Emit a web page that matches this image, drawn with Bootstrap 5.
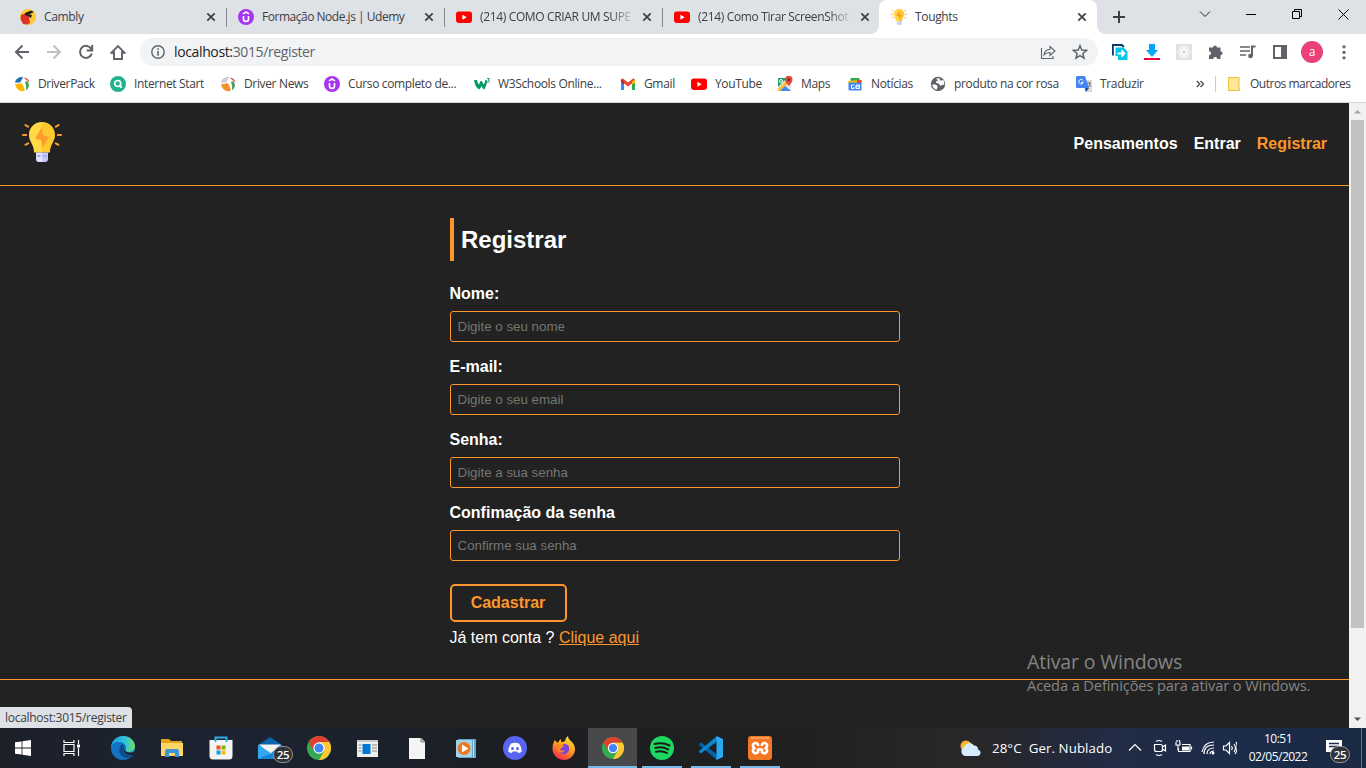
<!DOCTYPE html>
<html lang="pt">
<head>
<meta charset="utf-8">
<meta name="viewport" content="width=device-width, initial-scale=1">
<title>Toughts</title>
<link href="https://cdn.jsdelivr.net/npm/bootstrap@5.3.0/dist/css/bootstrap.min.css" rel="stylesheet">
<style>
:root{--amber:#fd972b;--ui:"Open Sans","Noto Sans",sans-serif}
body{width:1366px;height:768px;font-family:var(--ui);font-size:12px;color:#3c4043;letter-spacing:-.35px;line-height:16px}
svg{display:block;flex:none}
.tabstrip{height:34px;background:#dee1e6;padding-left:8px}
.btab{width:218px;height:34px;padding:0 10px 0 12px;position:relative}
.btab .ttl{width:155px;margin-left:8px;overflow:hidden;white-space:nowrap}
.btab .snug{letter-spacing:-.48px}
.btab .fade-out{-webkit-mask-image:linear-gradient(90deg,#000 84%,transparent);mask-image:linear-gradient(90deg,#000 84%,transparent)}
.btab.sep::after{content:"";position:absolute;right:-1px;top:8px;width:1px;height:19px;background:#85888d}
.btab.live{background:#fff;border-radius:8px 8px 0 0;margin-left:-1px}
.btab.live::before,.btab.live::after{content:"";position:absolute;bottom:0;width:8px;height:8px}
.btab.live::before{left:-8px;background:radial-gradient(circle at 0 0,transparent 7.5px,#fff 8px)}
.btab.live::after{right:-8px;background:radial-gradient(circle at 100% 0,transparent 7.5px,#fff 8px)}
.winctl{height:28px;width:46px;display:grid;place-items:center}
.toolbar{height:36px;padding:0 14px 0 14px}
.omni{width:958px;height:28px;border-radius:14px;background:#f1f3f4;padding:0 10px}
.url{font-size:14px;letter-spacing:-.37px;color:#5f6368}
.url b{font-weight:400;color:#202124}
.marks{height:33px;border-bottom:1px solid #d5d7da;padding:0 0 4px 14px}
.marks .strip{display:grid;grid-template-columns:96px 110px 104px 150px 146px 71px 86px 70px 83px 146px 120px}
.marks .divide{width:1px;height:16px;background:#c9cbce;margin-left:11px}
.marks .others{margin-left:10px;letter-spacing:-.5px}
.mk{display:flex;align-items:center;gap:8px;white-space:nowrap}
.page-area{height:625px;background:#222}
.view{width:1349px;font-family:"Liberation Sans",Arial,sans-serif;font-size:16px;line-height:18px;letter-spacing:0;color:#fff;position:relative}
.site-head{height:83px;border-bottom:1px solid var(--amber);padding:0 22px}
.site-head a{color:#fff;font-weight:700;text-decoration:none}
.site-head a.on,.amber{color:var(--amber)!important}
.reg{width:450px;margin:32px auto 0 449.5px}
.reg h1{font-size:24px;font-weight:700;line-height:27px;padding:8px 8px 8px 7.5px;border-left:4px solid var(--amber);margin:0 0 24px}
.reg label{display:block;font-weight:700;line-height:18px;margin-bottom:8px}
.reg .form-control{height:31px;padding:0 7px;border:1px solid var(--amber);border-radius:3px;background:transparent;font-size:13.333px;line-height:15px;margin-bottom:16px}
.reg .form-control::placeholder{color:#757575;opacity:1}
.reg .btn{width:117px;height:38px;padding:0;border:2px solid var(--amber);border-radius:5px;font-weight:700;font-size:16px;line-height:18px;margin-top:7px}
.reg p{margin:7px 0 0}
.site-foot{height:49px;border-top:1px solid var(--amber);margin-top:32px;position:relative;z-index:1}
.activate{position:absolute;left:1027px;top:546px;font-family:var(--ui);color:#858585;white-space:nowrap}
.activate .big{font-size:19.5px;line-height:26px;letter-spacing:-.15px}
.activate .sub{font-size:14.6px;line-height:20px;letter-spacing:-.1px}
.status{position:absolute;left:0;bottom:0;z-index:2;height:21px;width:132px;padding:2px 5px;background:#dee1e6;color:#3c4043;border-radius:0 4px 0 0;font-family:var(--ui);font-size:12px;letter-spacing:-.28px;line-height:17px;white-space:nowrap}
.sbar{width:17px;background:#f1f1f1;padding:0 2px}
.sbar .thumb{height:508px;background:#c1c1c1}
.taskbar{height:40px;color:#fff;background:linear-gradient(90deg,#1c2029 0,#1c2331 230px,#1b2029 420px,#1c1e21 520px,#20201f 800px,#292725 930px,#28272b 990px,#222b43 1100px,#1b2c4a 1240px,#1a2942)}
.tk{width:49px;height:40px;display:grid;place-items:center;position:relative}
.tk.run::after{content:"";position:absolute;left:5px;right:4px;bottom:0;height:2px;background:#76b9ed}
.tk.cur{background:#48494b}.tk.cur::after{left:0;right:0}
.cnt{position:absolute;display:grid;place-items:center;width:20px;height:17px;border:1px solid #999;border-radius:9px;background:#303236;color:#fff;font-weight:600;font-size:11.5px;line-height:14px}
.wx{font-size:13.3px;letter-spacing:.08px;white-space:pre;margin-left:11px;width:136px}
.clock{width:66px;text-align:center;line-height:18px;letter-spacing:-.5px}
.avatar{margin-left:13px}
.tray{margin-right:8px}
.notif{width:50px}
.notif svg{margin-right:4px}
.mail-cnt{left:28px;top:18px}
.notif-cnt{left:19px;top:18px}
.peek{width:5px}
</style>
</head>
<body class="overflow-hidden">
<svg width="0" height="0" class="position-absolute">
<defs>
<symbol id="x" viewBox="0 0 10 10"><path d="M1.300 1.300l7.400 7.400m0-7.400L1.300 8.700" stroke="#3c4043" stroke-width="1.700"/></symbol>
<symbol id="yt" viewBox="0 0 16 16"><rect y="2.500" width="16" height="11.400" rx="2.800" fill="#f00"/><path d="M6.400 5.700v5l4.300-2.500z" fill="#fff"/></symbol>
<symbol id="ud" viewBox="0 0 16 16"><circle cx="8" cy="8" r="8" fill="#a435f0"/><path d="M5 4.900L8 3l3 1.900M5.500 7v3q0 2.400 2.500 2.400t2.500-2.400V7" fill="none" stroke="#fff" stroke-width="1.700"/></symbol>
<symbol id="bulb" viewBox="0 0 40 40"><path d="M3.300 3l2.800 1.700M36.700 3l-2.800 1.700M1 13h3.200M39 13h-3.200M3.500 22.800l2.700-1.500M36.500 22.800l-2.700-1.500" stroke="#ff9a2c" stroke-width="2" stroke-linecap="round"/><path d="M20 0C12 0 7 6 7 13c0 7 5 9 5 17.500h8z" fill="#ffda44"/><path d="M20 0c8 0 13 6 13 13 0 7-5 9-5 17.500h-8z" fill="#ffc730"/><path d="M20 5L13 16.500l6.300 1.800L20 26l7-11-6.500-2z" fill="#ff9a2c"/><path d="M14 30.500h6V40h-3q-3 0-3-3z" fill="#e2e3ff"/><path d="M20 30.500h6V37q0 3-3 3h-3z" fill="#c7c9fb"/><path d="M15 34h3.500m2.500 0h4" stroke="#aaadf0" stroke-width="1.800"/></symbol>
<symbol id="chrome" viewBox="0 0 24 24"><circle cx="12" cy="12" r="12" fill="#34a853"/><path d="M22.400 6A12 12 0 0 1 12 24l5.200-9L12 6z" fill="#fcc934"/><path d="M1.600 6A12 12 0 0 1 22.400 6H12L6.800 15z" fill="#e0402f"/><circle cx="12" cy="12" r="5.700" fill="#fff"/><circle cx="12" cy="12" r="4.500" fill="#4285f4"/></symbol>
<symbol id="dp" viewBox="0 0 16 16"><path d="M.8 6Q3.500.5 9 1.200L6.500 6Q3.500 7.500.8 6z" fill="#1673b8"/><path d="M1 7.500q3 1.300 6-.7Q10.500 10 10.500 15 2.500 16.500 1 7.500z" fill="#ffb900"/><path d="M13 5q4.500 4.500-1 9.500Q12.500 9 11 6z" fill="#36a852"/><path d="M9.500 1.500q5 .5 6 5L12.500 4z" fill="#e43b37"/></symbol>
<symbol id="dn" viewBox="0 0 16 16"><path d="M.8 6Q3.500.5 9 1.200L6.500 6Q3.500 7.500.8 6z" fill="#c9cdd1"/><path d="M1 7.500q3 1.300 6-.7Q10.500 10 10.500 15 2.500 16.500 1 7.500z" fill="#f3912b"/><path d="M13 5q4.500 4.500-1 9.500Q12.500 9 11 6z" fill="#4b9b62"/><path d="M9.500 1.500q5 .5 6 5L12.500 4z" fill="#e43b37"/></symbol>
</defs></svg>

<div class="tabstrip d-flex">
<div class="btab sep d-flex align-items-center"><svg width="16" height="16" viewBox="0 0 16 16"><circle cx="8" cy="8" r="8" fill="#fccb34"/><path d="M1 6l5-2 4 2-1 3 1 5-3 1.500L3 15 .5 10z" fill="#d9322c"/><path d="M5 4l6-2.500L14 3 9 5.500 12 6l-1 3-3-2-3-1z" fill="#252024"/></svg><span class="ttl">Cambly</span><svg class="ms-auto" width="10" height="10"><use href="#x"/></svg></div>
<div class="btab sep d-flex align-items-center"><svg width="16" height="16"><use href="#ud"/></svg><span class="ttl snug">Formação Node.js | Udemy</span><svg class="ms-auto" width="10" height="10"><use href="#x"/></svg></div>
<div class="btab sep d-flex align-items-center"><svg width="16" height="16"><use href="#yt"/></svg><span class="ttl fade-out">(214) COMO CRIAR UM SUPE</span><svg class="ms-auto" width="10" height="10"><use href="#x"/></svg></div>
<div class="btab d-flex align-items-center"><svg width="16" height="16"><use href="#yt"/></svg><span class="ttl fade-out">(214) Como Tirar ScreenShot</span><svg class="ms-auto" width="10" height="10"><use href="#x"/></svg></div>
<div class="btab live d-flex align-items-center"><svg width="16" height="16"><use href="#bulb"/></svg><span class="ttl">Toughts</span><svg class="ms-auto" width="10" height="10"><use href="#x"/></svg></div>
<svg class="ms-3 mt-2" width="12" height="18" viewBox="0 0 12 18"><path d="M6 3v12M0 9h12" stroke="#3c4043" stroke-width="2"/></svg>
<div class="d-flex ms-auto">
<div class="winctl"><svg width="12" height="8" viewBox="0 0 12 8"><path d="M1 1.500l5 5 5-5" fill="none" stroke="#222"/></svg></div>
<div class="winctl"><svg width="10" height="10" viewBox="0 0 10 10"><path d="M0 5.500h10" stroke="#000"/></svg></div>
<div class="winctl"><svg width="10" height="10" viewBox="0 0 10 10"><path d="M.5 2.500h7v7h-7zM2.500 2.500v-2h7v7h-2" fill="none" stroke="#000"/></svg></div>
<div class="winctl"><svg width="11" height="11" viewBox="0 0 11 11"><path d="M.5.5l10 10m0-10l-10 10" stroke="#000"/></svg></div>
</div>
</div>

<div class="toolbar d-flex align-items-center">
<svg width="126" height="18" viewBox="0 0 126 18"><g fill="none" stroke="#5f6368" stroke-width="2"><path d="M15 9H2.500M8.500 2.500L2 9l6.500 6.500"/><path stroke="#bdc1c6" d="M33 9h12.500M39.500 2.500L46 9l-6.500 6.500"/><path d="M77.300 6A6 6 0 1 0 77.800 10.500M78.200 2v5.500h-5.500"/><path d="M98 9.200l6-6.200 6 6.200h-2V16h-8V9.200z" stroke-width="1.900"/><path d="M96.500 9.900h4M107.500 9.900h4" stroke-width="1.500"/></g></svg>
<div class="omni d-flex align-items-center">
<svg width="16" height="16" viewBox="0 0 16 16"><circle cx="8" cy="8" r="6.200" fill="none" stroke="#5f6368" stroke-width="1.400"/><path d="M8 4.200v1.600M8 7v4.800" stroke="#5f6368" stroke-width="1.600"/></svg>
<span class="url ms-2"><b>localhost:</b>3015/register</span>
<svg class="ms-auto" width="16" height="16" viewBox="0 0 16 16"><path d="M1.500 4v10.500H13v-2.500M4 11q.7-5.500 6-5.500V2.500L15 7l-5 4.500v-3Q6 8.500 4 11z" fill="none" stroke="#5f6368" stroke-width="1.100"/></svg>
<svg class="ms-3" width="16" height="16" viewBox="0 0 16 16"><path d="M8 1.800l1.800 4.300 4.700.4-3.600 3 1.100 4.600L8 11.600l-4 2.500 1.100-4.600-3.600-3 4.700-.4z" fill="none" stroke="#5f6368" stroke-width="1.500"/></svg>
</div>
<div class="d-flex align-items-center ms-auto">
<svg width="16" height="16" viewBox="0 0 16 16"><path d="M.9 11.500V1h9l2 2" fill="none" stroke="#0b3b66" stroke-width="1.800"/><path d="M3.500 3.500h8l4 4V16H6v-4H3.500z" fill="#00c8e6"/><path d="M5.500 9.500h6.500M9.500 6.500l3 3-3 3" fill="none" stroke="#fff" stroke-width="1.800"/></svg>
<svg class="ms-3" width="16" height="16" viewBox="0 0 16 16"><path d="M5 0h6v6h3l-6 7-6-7h3z" fill="#00a7f2"/><path d="M0 15h16" stroke="#f0003c" stroke-width="2"/></svg>
<svg class="ms-3" width="16" height="16" viewBox="0 0 16 16"><path fill="#e2e2e2" d="M0 0h16v16H0z"/><g fill="none" stroke="#fff"><ellipse cx="8" cy="8" rx="6" ry="2.400"/><ellipse cx="8" cy="8" rx="6" ry="2.400" transform="rotate(60 8 8)"/><ellipse cx="8" cy="8" rx="6" ry="2.400" transform="rotate(120 8 8)"/></g></svg>
<svg class="ms-3" width="16" height="16" viewBox="0 0 16 16"><path d="M1 3.500h4a2 2 0 1 1 4 0h3.500v3.700a2 2 0 1 1 0 4V15H9.200a2 2 0 1 0-4 0H1v-3.700a2 2 0 1 0 0-4z" fill="#5f6368"/></svg>
<svg class="ms-3" width="16" height="16" viewBox="0 0 16 16"><path d="M0 3h10M0 7h10M0 11h6" stroke="#5f6368" stroke-width="1.700"/><path d="M12 12V2.500h3.500" fill="none" stroke="#5f6368" stroke-width="2"/><circle cx="10.500" cy="12" r="2.300" fill="#5f6368"/></svg>
<svg class="ms-3" width="16" height="16" viewBox="0 0 16 16"><path d="M1 1h14v14H1zM3 3v10h6V3z" fill="#5f6368" fill-rule="evenodd"/></svg>
<svg class="avatar" width="22" height="22" viewBox="0 0 22 22"><circle cx="11" cy="11" r="11" fill="#ec407a"/><text x="11" y="15" text-anchor="middle" font-size="12" fill="#fff">a</text></svg>
<svg class="avatar" width="16" height="16" viewBox="0 0 16 16"><g fill="#5f6368"><circle cx="8" cy="2.800" r="1.600"/><circle cx="8" cy="8.300" r="1.600"/><circle cx="8" cy="13.800" r="1.600"/></g></svg>
</div>
</div>

<div class="marks d-flex align-items-center">
<div class="strip">
<div class="mk"><svg width="16" height="16"><use href="#dp"/></svg>DriverPack</div>
<div class="mk"><svg width="16" height="16" viewBox="0 0 16 16"><circle cx="8" cy="8" r="8" fill="#1fb191"/><circle cx="7.700" cy="7.500" r="3" fill="none" stroke="#fff" stroke-width="1.700"/><path d="M9.500 9.500l2.200 2.200" stroke="#fff" stroke-width="1.800"/></svg>Internet Start</div>
<div class="mk"><svg width="16" height="16"><use href="#dn"/></svg>Driver News</div>
<div class="mk"><svg width="16" height="16"><use href="#ud"/></svg>Curso completo de...</div>
<div class="mk"><svg width="16" height="16" viewBox="0 0 16 16"><path d="M0 4h3q.3 3 2 4.500L6.500 5H8q.5 2.500 2 3.500L11.500 4H13q0 6-3 9.500Q8 12 7.500 10 6.500 12.500 5 13.500 1 11 0 4z" fill="#059862"/><path d="M13 2.500h2.400L14 4q2 .3 1.300 1.700-.8 1-2.300.3" fill="none" stroke="#059862" stroke-width=".9"/></svg>W3Schools Online...</div>
<div class="mk"><svg width="16" height="16" viewBox="0 0 16 16"><path d="M1.500 3.500L8 8.500l6.500-5" fill="none" stroke="#ea4335" stroke-width="3.200"/><path d="M1 3l3 2.500V14H1z" fill="#4285f4"/><path d="M15 3l-3 2.500V14h3z" fill="#34a853"/><path d="M12 5.700L15 3v4l-3 1.500z" fill="#fbbc04"/><path d="M1 3l3 2.500v3L1 6z" fill="#c5221f"/></svg>Gmail</div>
<div class="mk"><svg width="16" height="16"><use href="#yt"/></svg>YouTube</div>
<div class="mk"><svg width="16" height="16" viewBox="0 0 16 16"><path d="M1 2h13v13H1z" fill="#e4e4e4"/><path d="M1 2h9L1 11z" fill="#1ea362"/><path d="M1 13l11-11 2 2v1L3 15H1z" fill="#fbc02d"/><path d="M3 15l5-5 6 5z" fill="#4285f4"/><path d="M12 10Q8 6 8 3.500a3.600 3.600 0 0 1 7.500 0Q15.500 6 12 10z" fill="#dd4b3e"/><circle cx="11.800" cy="3.700" r="1.300" fill="#822"/><circle cx="4" cy="5" r="1.500" fill="none" stroke="#fff"/></svg>Maps</div>
<div class="mk"><svg width="16" height="16" viewBox="0 0 16 16"><path d="M3.500 2h9v5h-9z" fill="#34a853"/><path d="M1 5l13-1v4H2z" fill="#fbbc04"/><path d="M10 3.500l5 1-1 4h-4z" fill="#ea4335"/><rect x="1.500" y="6.500" width="13" height="8" rx="1" fill="#4285f4"/><path d="M7 9H4.500v3.500H7V11M9 9h3.500v3.500H9zM9 10.700h3.500" fill="none" stroke="#fff"/></svg>Notícias</div>
<div class="mk"><svg width="16" height="16" viewBox="0 0 16 16"><circle cx="8" cy="8" r="7.200" fill="#5f6368"/><path d="M2.200 8.500h3.300l2 1.500v1.500l-1 2.300Q2.500 12.500 2.200 8.500zM6 2.600l4-.3-.5 2 2 .2 1.800-.8Q14.500 6 14.200 9l-2-.3L10.500 10 8.700 7.500 6 7l.3-1.800L8 4.500z" fill="#fff"/></svg>produto na cor rosa</div>
<div class="mk"><svg width="16" height="16" viewBox="0 0 16 16"><path d="M6 4h10v12H9z" fill="#dadada"/><path d="M1 0h8l4 12H1q-1 0-1-1V1z" fill="#4285f4"/><path d="M9 12h4l-3 4z" fill="#174ea6"/><path d="M7 4.500A2.300 2.300 0 1 0 7.200 6.500H5" fill="none" stroke="#fff"/><path d="M11 7h4M13 6q1 4 2 5M14 7q0 2-2 4" fill="none" stroke="#6a6d70" stroke-width=".8"/></svg>Traduzir</div>
</div>
<svg width="8" height="8" viewBox="0 0 8 8"><path d="M.8 1l3 3-3 3M4.500 1l3 3-3 3" fill="none" stroke="#4a4d51" stroke-width="1.300"/></svg>
<div class="divide"></div>
<div class="mk others"><svg width="16" height="16" viewBox="0 0 16 16"><path d="M2.500 1.500h10.500v10q1.500 1.500.5 3h-11z" fill="#ffe798" stroke="#e6bf45"/></svg>Outros marcadores</div>
</div>

<div class="page-area d-flex">
<div class="view">
<header class="site-head d-flex align-items-center justify-content-between">
<svg width="40" height="40" class="mb-1"><use href="#bulb"/></svg>
<nav class="d-flex gap-3"><a href="#">Pensamentos</a><a href="#">Entrar</a><a href="#" class="on">Registrar</a></nav>
</header>
<main class="reg">
<h1>Registrar</h1>
<form>
<label for="n">Nome:</label><input id="n" class="form-control" placeholder="Digite o seu nome">
<label for="e">E-mail:</label><input id="e" class="form-control" placeholder="Digite o seu email">
<label for="s">Senha:</label><input id="s" class="form-control" placeholder="Digite a sua senha">
<label for="c">Confimação da senha</label><input id="c" class="form-control" placeholder="Confirme sua senha">
<button type="button" class="btn amber">Cadastrar</button>
</form>
<p>Já tem conta ? <a href="#" class="amber">Clique aqui</a></p>
</main>
<footer class="site-foot"></footer>
<div class="activate"><div class="big">Ativar o Windows</div><div class="sub">Aceda a Definições para ativar o Windows.</div></div>
<div class="status">localhost:3015/register</div>
</div>
<div class="sbar d-flex flex-column">
<svg width="13" height="17" viewBox="0 0 13 17"><path d="M3 10.500h7L6.500 7z" fill="#a3a3a3"/></svg>
<div class="thumb"></div>
<svg class="mt-auto" width="13" height="17" viewBox="0 0 13 17"><path d="M3 6.500h7L6.500 10z" fill="#505050"/></svg>
</div>
</div>

<div class="taskbar d-flex align-items-center">
<div class="tk"><svg class="me-1" width="16" height="16" viewBox="0 0 16 16"><path d="M0 2.300L6.600 1.400v6.200H0zM7.400 1.300L16 0v7.600H7.400zM0 8.400h6.600v6.200L0 13.700zM7.400 8.400H16V16l-8.600-1.300z" fill="#fff"/></svg></div>
<div class="tk"><svg class="me-1" width="17" height="16" viewBox="0 0 17 16"><path d="M1 0v2.500h10V0M1 16v-2.500h10V16M1 4.500h10v7H1zM15.500 0v4M15.500 8v8" fill="none" stroke="#fff" stroke-width="1.200"/><path d="M14 4.500h3v3h-3z" fill="#fff"/></svg></div>
<div class="tk"><svg width="24" height="24" viewBox="0 0 24 24"><defs><linearGradient id="eg"><stop stop-color="#1b9de2"/><stop offset=".6" stop-color="#32c4d6"/><stop offset="1" stop-color="#6be066"/></linearGradient></defs><circle cx="12" cy="12" r="12" fill="#1272c4"/><path d="M0 11C1 4 6 0 12 0c7 0 12 5 12 10 0 4-3 6-6 6-3 0-4-1-3-3C16 9 12 6 8 6 4 6 1 8 0 11z" fill="url(#eg)"/><path d="M10 9c-4 5-1 12 5 13 4 0 6-2 7-4-3 2-9 2-10-3 0-3 2-3 1-5-.5-1.500-2-2-3-1z" fill="#114a8b"/><path d="M13 11c-1 4 4 7 9.500 5l2 0v4l-3-1c-5 1-9-2-9-5z" fill="#1c2331"/></svg></div>
<div class="tk"><svg width="22" height="18" viewBox="0 0 22 18"><path d="M0 0h8l2 2h11v15H0z" fill="#e8a317"/><path d="M0 4h22v13H0z" fill="#ffd766"/><path d="M4 18v-6q0-2 2-2h10q2 0 2 2v6h-4v-4H8v4z" fill="#3b96d9"/></svg></div>
<div class="tk"><svg width="24" height="24" viewBox="0 0 24 24"><path d="M6.500 5.500V1.500h11v4" fill="none" stroke="#27aee8" stroke-width="2"/><path d="M.5 4h23v16q0 3.500-3.500 3.500H4Q.5 23.500.5 20z" fill="#f4f4f4"/><path d="M6.500 4v2m11-2v2" stroke="#27aee8" stroke-width="2"/><path d="M7.500 9.500h4v4h-4z" fill="#f25022"/><path d="M12.500 9.500h4v4h-4z" fill="#7fba00"/><path d="M7.500 14.500h4v4h-4z" fill="#00a4ef"/><path d="M12.500 14.500h4v4h-4z" fill="#ffb900"/></svg></div>
<div class="tk"><svg width="24" height="22" viewBox="0 0 24 22"><path d="M0 8l12-8 12 8z" fill="#0a64ad"/><path d="M0 8h24v14H0z" fill="#1588d8"/><path d="M1 7.500h22L12 17z" fill="#f3f3f3"/><path d="M0 8l13 8-13 6z" fill="#31a8ef"/></svg><span class="cnt mail-cnt">25</span></div>
<div class="tk"><svg width="24" height="24"><use href="#chrome"/></svg></div>
<div class="tk"><svg width="21" height="17" viewBox="0 0 21 17"><path d="M0 0h21v17H0z" fill="#eee"/><path d="M0 0h21v2H0z" fill="#c5c8cb"/><path d="M5.500 4h8v10h-8z" fill="#0078d7"/><path d="M1.500 5h3m-3 3h3m-3 3h3M15 5h5m-5 3h5m-5 3h5" stroke="#888"/></svg></div>
<div class="tk"><svg width="16" height="21" viewBox="0 0 16 21"><path d="M0 0h12l4 4v17H0z" fill="#f4f4f4"/><path d="M12 0v4h4" fill="#bbb" stroke="#888"/></svg></div>
<div class="tk"><svg width="20" height="19" viewBox="0 0 20 19"><path d="M2 0h18v19H2z" fill="#5da7c8"/><path d="M0 1h16v17H0z" fill="#a5d2e4"/><path d="M17.500 1v17" stroke="#b9e0ee"/><circle cx="8" cy="9.500" r="6.500" fill="#f0761f"/><path d="M6 5.500v8l6.500-4z" fill="#fff"/></svg></div>
<div class="tk"><svg width="24" height="24" viewBox="0 0 24 24"><circle cx="12" cy="12" r="12" fill="#5865f2"/><path d="M8 7.500q4-1.500 8 0 2.800 3.500 2.800 8-2 1.500-3.500 1.500l-1-1.500H9.700l-1 1.500q-1.500 0-3.500-1.500 0-4.500 2.800-8z" fill="#fff"/><circle cx="9.500" cy="12.500" r="1.500" fill="#5865f2"/><circle cx="14.500" cy="12.500" r="1.500" fill="#5865f2"/></svg></div>
<div class="tk"><svg width="24" height="24" viewBox="0 0 24 24"><defs><linearGradient id="fx" x1=".8" y1="0" x2=".3" y2="1"><stop stop-color="#ffe63b"/><stop offset=".5" stop-color="#ff9a20"/><stop offset="1" stop-color="#f0254e"/></linearGradient></defs><path d="M2.500 4l3.500 3q1-3 3-4v3q3 0 4-1 0-3 3-5 0 3 4 6 3 3 3 8c-1 6-5 10-11 10S1 19 .5 14q-.5-5 2-10z" fill="url(#fx)"/><path d="M11 8q7-1 6 6-2 5-7 4-4-2-3-6l4-1z" fill="#7a42d9"/><path d="M5 8l7 1-2 3-2 1q1 3 5 1-2 4-6 2-4-3-2-8z" fill="#ff871f"/></svg></div>
<div class="tk cur run"><svg width="22" height="22"><use href="#chrome"/></svg></div>
<div class="tk run"><svg width="24" height="24" viewBox="0 0 24 24"><circle cx="12" cy="12" r="12" fill="#1ed760"/><path d="M4.500 8q8-2.300 15 1.500M5.200 12q7-2 13 1.500M6 15.700q6-1.500 11 1.300" fill="none" stroke="#171b18" stroke-width="2" stroke-linecap="round"/></svg></div>
<div class="tk run"><svg width="24" height="24" viewBox="0 0 24 24"><path d="M0 8l2-1.500 16 12V24L0 9z" fill="#0065a9"/><path d="M0 16l2 1.500L18 5.500V0L0 15z" fill="#0c83cf"/><path d="M17.500 0L24 3v18l-6.500 3z" fill="#29a9f2"/></svg></div>
<div class="tk run"><svg width="24" height="24" viewBox="0 0 24 24"><rect width="24" height="24" rx="3" fill="#f37623"/><path d="M3 2h18" stroke="#ffc49a"/><g fill="none" stroke="#fff" stroke-width="2.600" stroke-linejoin="round"><path d="M10 10V8.500a2.700 2.700 0 1 0-3.500 3.700A2.700 2.700 0 1 0 10 16v-2.500h4V16a2.700 2.700 0 1 0 3.500-3.800A2.700 2.700 0 1 0 14 8.500V10"/></g></svg></div>
<div class="d-flex align-items-center ms-auto">
<svg width="21" height="17" viewBox="0 0 21 17"><circle cx="6" cy="6" r="5.500" fill="#ffb92e"/><path d="M5 16a4.500 4.500 0 0 1-1-8.500 5.500 5.500 0 0 1 10-2 4 4 0 0 1 4 4q3 1 2.500 4-.5 2-3 2.500z" fill="#d5edff"/></svg>
<span class="wx">28°C  Ger. Nublado</span>
<svg class="tray" width="109" height="20" viewBox="0 0 109 20"><g fill="none" stroke="#fff" stroke-width="1.200"><path d="M1 12.500l6-6 6 6"/><path d="M26.500 6.500h6q2 0 2 2v3q0 2-2 2h-4q-2 0-2-2zM34.500 9l3-2v6l-3-2M28 3.500q3-2 6 0M28 16.500q3 2 6 0"/><path d="M54 6.500h8v7H50.500v-3M63.500 8.500v3M48 4v3h4V4M50 7v5M49 2v2M51.500 2v2"/><path d="M76 16q0-9 10-9M79 16q0-6 7-6M82 16q0-3 4-3M74 14q2-10 12-10"/><path d="M95.500 8h2.500l3.500-3.500v11L98 12h-2.500zM103.500 8q1.500 2 0 4M106 6q3 4 0 8M108 4q3 6-1 12"/></g><path d="M54 8.500h7v4h-7z" fill="#fff"/><circle cx="85" cy="15" r="1.500" fill="#fff"/></svg>
<div class="clock">10:51<br>02/05/2022</div>
<div class="tk notif"><svg width="16" height="16" viewBox="0 0 16 16"><path d="M0 0h16v12h-6v4l-4-4H0z" fill="#fff"/><path d="M3 3.500h10M3 6.500h10" stroke="#1b2c4a" stroke-width="1.300"/></svg><span class="cnt notif-cnt">25</span></div>
<div class="peek border-start border-secondary align-self-stretch"></div>
</div>
</div>
<script src="https://cdn.jsdelivr.net/npm/bootstrap@5.3.0/dist/js/bootstrap.bundle.min.js"></script>
</body>
</html>
